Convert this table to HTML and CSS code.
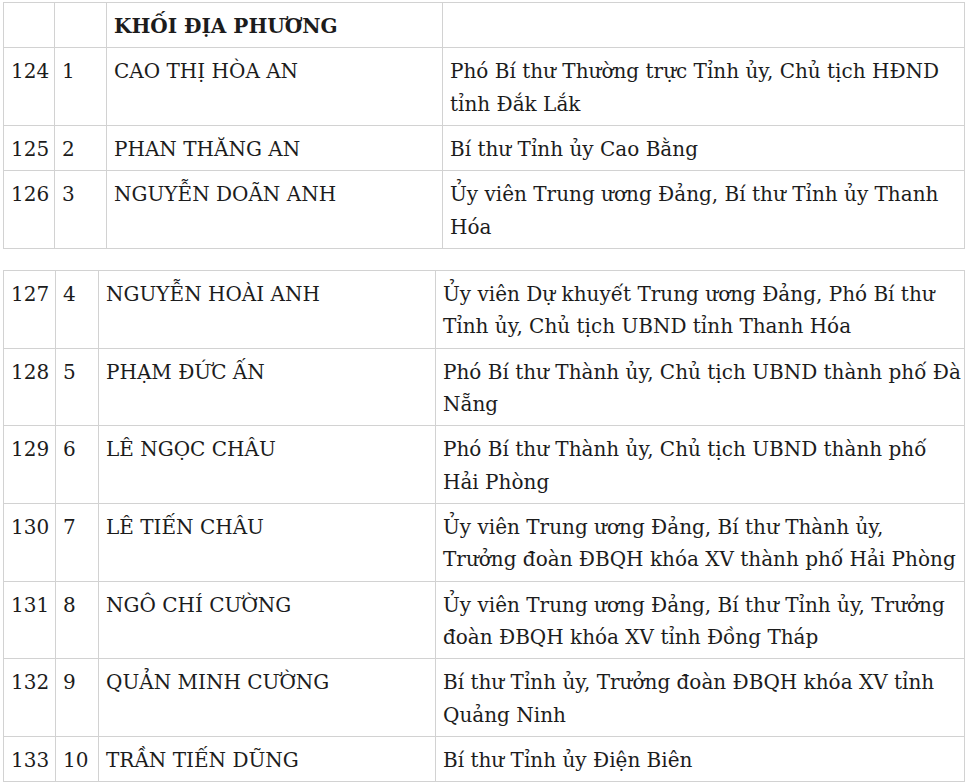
FILE: index.html
```html
<!DOCTYPE html>
<html lang="vi">
<head>
<meta charset="utf-8">
<title>Danh sách</title>
<link rel="stylesheet" href="styles.css">
</head>
<body>
<div class="page">
  <table class="list list-a">
    <colgroup><col class="c1"><col class="c2"><col class="c3"><col></colgroup>
    <tr><td></td><td></td><td class="head">KHỐI ĐỊA PHƯƠNG</td><td></td></tr>
    <tr><td>124</td><td>1</td><td>CAO THỊ HÒA AN</td><td>Phó Bí thư Thường trực Tỉnh ủy, Chủ tịch HĐND<br>tỉnh Đắk Lắk</td></tr>
    <tr><td>125</td><td>2</td><td>PHAN THĂNG AN</td><td>Bí thư Tỉnh ủy Cao Bằng</td></tr>
    <tr><td>126</td><td>3</td><td>NGUYỄN DOÃN ANH</td><td>Ủy viên Trung ương Đảng, Bí thư Tỉnh ủy Thanh<br>Hóa</td></tr>
  </table>
  <table class="list list-b">
    <colgroup><col class="c1"><col class="c2"><col class="c3"><col></colgroup>
    <tr><td>127</td><td>4</td><td>NGUYỄN HOÀI ANH</td><td>Ủy viên Dự khuyết Trung ương Đảng, Phó Bí thư<br>Tỉnh ủy, Chủ tịch UBND tỉnh Thanh Hóa</td></tr>
    <tr><td>128</td><td>5</td><td>PHẠM ĐỨC ẤN</td><td>Phó Bí thư Thành ủy, Chủ tịch UBND thành phố Đà<br>Nẵng</td></tr>
    <tr><td>129</td><td>6</td><td>LÊ NGỌC CHÂU</td><td>Phó Bí thư Thành ủy, Chủ tịch UBND thành phố<br>Hải Phòng</td></tr>
    <tr><td>130</td><td>7</td><td>LÊ TIẾN CHÂU</td><td>Ủy viên Trung ương Đảng, Bí thư Thành ủy,<br>Trưởng đoàn ĐBQH khóa XV thành phố Hải Phòng</td></tr>
    <tr><td>131</td><td>8</td><td>NGÔ CHÍ CƯỜNG</td><td>Ủy viên Trung ương Đảng, Bí thư Tỉnh ủy, Trưởng<br>đoàn ĐBQH khóa XV tỉnh Đồng Tháp</td></tr>
    <tr><td>132</td><td>9</td><td>QUẢN MINH CƯỜNG</td><td>Bí thư Tỉnh ủy, Trưởng đoàn ĐBQH khóa XV tỉnh<br>Quảng Ninh</td></tr>
    <tr><td>133</td><td>10</td><td>TRẦN TIẾN DŨNG</td><td>Bí thư Tỉnh ủy Điện Biên</td></tr>
  </table>
</div>
</body>
</html>
```
FILE: styles.css
```css
html, body {
  margin: 0;
  padding: 0;
  background: #ffffff;
}
.page {
  padding: 2px 3px 0 3px;
  font-family: "DejaVu Serif", "Liberation Serif", serif;
  font-size: 20px;
  line-height: 32.33px;
  color: #1c1c1c;
}
.list {
  width: 100%;
  border-collapse: collapse;
  table-layout: fixed;
}
.list td {
  border: 1px solid #d2d2d2;
  padding: 7px 4px 5px 7px;
  vertical-align: top;
  white-space: nowrap;
  overflow: hidden;
}
.list-a .c1 { width: 51px; }
.list-a .c2 { width: 52px; }
.list-a .c3 { width: 336px; }
.list-b { margin-top: 21px; }
.list-b .c1 { width: 52px; }
.list-b .c2 { width: 43px; }
.list-b .c3 { width: 337px; }
.head { font-weight: bold; }
```
